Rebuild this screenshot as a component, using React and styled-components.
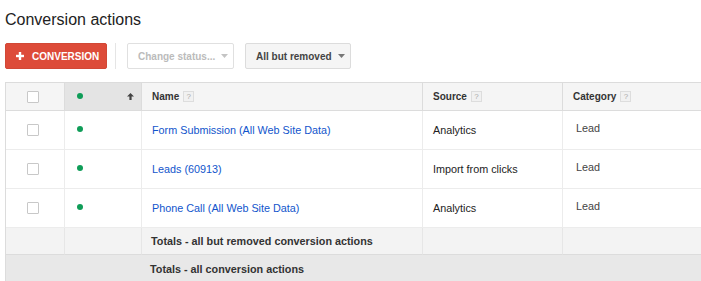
import React from "react";
import styled, { createGlobalStyle } from "styled-components";

const Global = createGlobalStyle`
  body {
    margin: 0;
    background: #fff;
    overflow: hidden;
    font-family: "Liberation Sans", Arial, sans-serif;
  }
`;

const Page = styled.div`
  padding-left: 5px;
  width: 900px;
`;

const Title = styled.h1`
  margin: 0;
  padding-top: 10px;
  font-size: 16px;
  line-height: 20px;
  font-weight: normal;
  color: #222;
`;

const Toolbar = styled.div`
  display: flex;
  align-items: center;
  margin-top: 13px;
  height: 26px;
`;

const RedButton = styled.button`
  display: flex;
  align-items: center;
  gap: 8px;
  width: 102px;
  height: 26px;
  padding: 0 0 0 10px;
  background: #dd4b39;
  border: 1px solid #d14836;
  border-radius: 2px;
  color: #fff;
  font-family: inherit;
  font-size: 10px;
  font-weight: bold;
`;

const Separator = styled.div`
  width: 1px;
  height: 26px;
  background: #e5e5e5;
  margin: 0 11px 0 8px;
`;

const Dropdown = styled.button`
  display: flex;
  align-items: center;
  gap: 6px;
  width: ${(p) => p.$width}px;
  height: 26px;
  margin-right: 11px;
  padding: 0 0 0 10px;
  background: ${(p) => (p.$disabled ? "#fff" : "#f5f5f5")};
  border: 1px solid ${(p) => (p.$disabled ? "#e0e0e0" : "#dcdcdc")};
  border-radius: 2px;
  color: ${(p) => (p.$disabled ? "#bbb" : "#444")};
  font-family: inherit;
  font-size: 10px;
  font-weight: bold;
`;

const Caret = ({ color }) => (
  <svg width="7" height="4" viewBox="0 0 7 4">
    <path d="M0 0h7L3.5 4z" fill={color} />
  </svg>
);

const Plus = () => (
  <svg width="8" height="8" viewBox="0 0 8 8">
    <rect x="2.8" y="0" width="2.4" height="8" fill="#fff" />
    <rect x="0" y="2.8" width="8" height="2.4" fill="#fff" />
  </svg>
);

const Table = styled.div`
  margin-top: 13px;
  border-top: 1px solid #dcdcdc;
  border-left: 1px solid #dcdcdc;
`;

const Row = styled.div`
  display: grid;
  grid-template-columns: 59px 77px 281px 140px 300px;
  height: ${(p) => p.$h}px;
  background: ${(p) => p.$bg || "#fff"};
`;

const Cell = styled.div`
  box-sizing: border-box;
  display: flex;
  align-items: center;
  border-right: 1px solid ${(p) => p.$line || "#ececec"};
  border-bottom: 1px solid ${(p) => p.$bottom || "#ececec"};
  background: ${(p) => p.$bg || "transparent"};
  padding: 0 0 ${(p) => p.$pb || 0}px ${(p) => p.$pl ?? 10}px;
  font-size: 10.8px;
  color: ${(p) => p.$color || "#222"};
`;

const HeadCell = styled(Cell)`
  font-size: 10px;
  font-weight: bold;
  color: #333;
  border-right-color: #dcdcdc;
  border-bottom-color: #dcdcdc;
  background: ${(p) => p.$bg || "#f5f5f5"};
`;

const StatusHead = styled(HeadCell)`
  justify-content: space-between;
  padding-right: 7px;
`;

const Check = styled.span`
  box-sizing: border-box;
  width: 12px;
  height: 12px;
  border: 1px solid #c8c8c8;
  background: #fff;
  border-radius: 1px;
`;

const Dot = styled.span`
  width: 6px;
  height: 6px;
  border-radius: 50%;
  background: #0f9d58;
  margin-bottom: ${(p) => p.$mb || 0}px;
`;

const Help = styled.span`
  box-sizing: border-box;
  display: inline-flex;
  align-items: center;
  justify-content: center;
  width: 11px;
  height: 11px;
  margin-left: 4px;
  border: 1px solid #ddd;
  background: #f1f1f1;
  color: #aaa;
  font-size: 8px;
  font-weight: normal;
`;

const Link = styled.a`
  color: #1155cc;
  text-decoration: none;
`;

const TotalText = styled.span`
  font-weight: bold;
  color: #333;
`;

const GrandRow = styled.div`
  display: flex;
  align-items: center;
  height: 27px;
  padding-left: 144px;
  background: #e8e8e8;
  font-size: 10.8px;
`;

const SortArrow = () => (
  <svg width="7" height="7" viewBox="0 0 7 7">
    <path d="M3.5 0L7 3.5H4.6V7H2.4V3.5H0z" fill="#444" />
  </svg>
);

const rows = [
  { name: "Form Submission (All Web Site Data)", source: "Analytics" },
  { name: "Leads (60913)", source: "Import from clicks" },
  { name: "Phone Call (All Web Site Data)", source: "Analytics" },
];

export default function App() {
  return (
    <Page>
      <Global />
      <Title>Conversion actions</Title>
      <Toolbar>
        <RedButton>
          <Plus />
          CONVERSION
        </RedButton>
        <Separator />
        <Dropdown $width={107} $disabled>
          Change status...
          <Caret color="#c4c4c4" />
        </Dropdown>
        <Dropdown $width={106}>
          All but removed
          <Caret color="#777" />
        </Dropdown>
      </Toolbar>
      <Table>
        <Row $h={28}>
          <HeadCell $pl={21}>
            <Check />
          </HeadCell>
          <StatusHead $bg="#e4e4e4" $pl={12}>
            <Dot $mb={2} />
            <SortArrow />
          </StatusHead>
          <HeadCell>
            Name<Help>?</Help>
          </HeadCell>
          <HeadCell>
            Source<Help>?</Help>
          </HeadCell>
          <HeadCell>
            Category<Help>?</Help>
          </HeadCell>
        </Row>
        {rows.map((r) => (
          <Row $h={39} key={r.name}>
            <Cell $pl={21}>
              <Check />
            </Cell>
            <Cell $pl={12}>
              <Dot $mb={3} />
            </Cell>
            <Cell $pl={10}>
              <Link href="#">{r.name}</Link>
            </Cell>
            <Cell>{r.source}</Cell>
            <Cell $pl={13} $pb={4} $color="#444">
              Lead
            </Cell>
          </Row>
        ))}
        <Row $h={27} $bg="#f3f3f3">
          <Cell $line="#e6e6e6" $bottom="#dcdcdc" />
          <Cell $line="#e6e6e6" $bottom="#dcdcdc" />
          <Cell $pl={9} $line="#e6e6e6" $bottom="#dcdcdc">
            <TotalText>Totals - all but removed conversion actions</TotalText>
          </Cell>
          <Cell $line="#e6e6e6" $bottom="#dcdcdc" />
          <Cell $line="#e6e6e6" $bottom="#dcdcdc" />
        </Row>
        <GrandRow>
          <TotalText>Totals - all conversion actions</TotalText>
        </GrandRow>
      </Table>
    </Page>
  );
}
